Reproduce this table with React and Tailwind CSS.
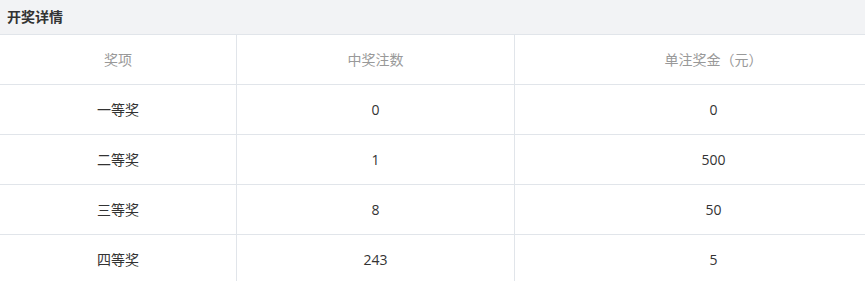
const rows = [
  ["一等奖", "0", "0"],
  ["二等奖", "1", "500"],
  ["三等奖", "8", "50"],
  ["四等奖", "243", "5"],
];

export default function App() {
  return (
    <div className="w-[865px] h-[281px] overflow-hidden bg-white font-['Open_Sans','Noto_Sans_CJK_SC',sans-serif]">
      <div className="h-[35px] bg-[#f2f3f5] border-b border-[#e1e5ea] flex items-center pl-[7px] pb-[2px]">
        <span className="text-[14px] font-bold text-[#333]">开奖详情</span>
      </div>
      <div className="grid grid-cols-[237px_278px_397px] w-[912px] text-[14px]">
        {["奖项", "中奖注数", "单注奖金（元）"].map((h, i) => (
          <div
            key={h}
            className={`h-[50px] flex items-center justify-center text-[#999] border-b border-[#e1e5ea] ${i < 2 ? "border-r" : ""}`}
          >
            {h}
          </div>
        ))}
        {rows.map((r) =>
          r.map((c, i) => (
            <div
              key={r[0] + i}
              className={`h-[50px] flex items-center justify-center text-[#333] border-b border-[#e1e5ea] ${i < 2 ? "border-r" : ""}`}
            >
              {c}
            </div>
          ))
        )}
      </div>
    </div>
  );
}
